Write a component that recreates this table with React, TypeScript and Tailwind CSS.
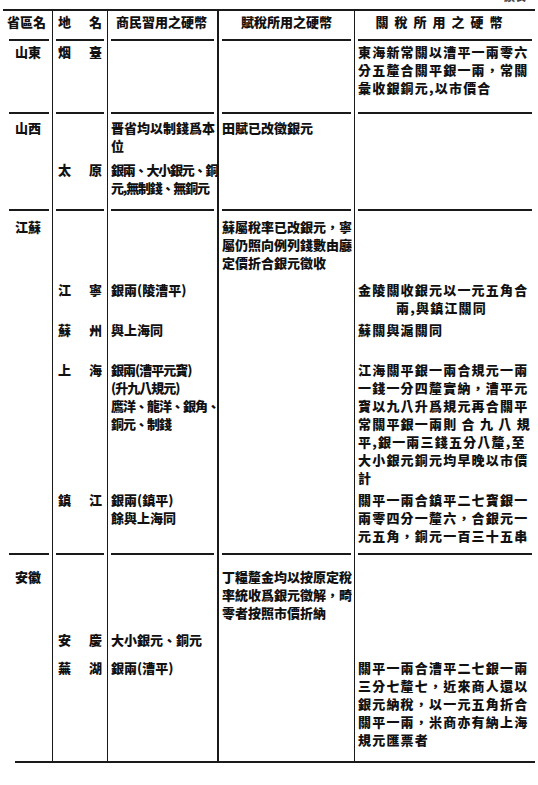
import React from "react";

const font = "font-['Noto_Sans_CJK_TC','Noto_Sans_CJK_SC',sans-serif] font-black text-[#111]";
const cols = "grid grid-cols-[49px_55px_110px_137px_181px]";

function Lines({ lines, className = "" }: { lines: React.ReactNode[]; className?: string }) {
  return (
    <div className={className}>
      {lines.map((l, i) => (
        <div key={i} className="h-[18px] leading-[18px] whitespace-pre">
          {l}
        </div>
      ))}
    </div>
  );
}

function Pair({ a, b }: { a: string; b: string }) {
  return (
    <div className="flex justify-between px-[5px] h-[18px] leading-[18px]">
      <span>{a}</span>
      <span>{b}</span>
    </div>
  );
}

// separator under a block, broken at the column lines
function Rule() {
  return (
    <div className={`${cols} h-[2px]`}>
      <div className="flex items-center pl-[6px] pr-[3px]">
        <div className="h-[1.5px] w-full bg-[#1a1a1a]" />
      </div>
      <div className="flex items-center px-[3px] border-l-[1.5px] border-[#1a1a1a]">
        <div className="h-[1.5px] w-full bg-[#1a1a1a]" />
      </div>
      <div className="flex items-center px-[3px] border-l-[1.5px] border-[#1a1a1a]">
        <div className="h-[1.5px] w-full bg-[#1a1a1a]" />
      </div>
      <div className="flex items-center px-[3px] border-l-2 border-[#1a1a1a]">
        <div className="h-[1.5px] w-full bg-[#1a1a1a]" />
      </div>
      <div className="flex items-center px-[3px] border-l-[1.5px] border-[#1a1a1a]">
        <div className="h-[1.5px] w-full bg-[#1a1a1a]" />
      </div>
    </div>
  );
}

const c2 = "border-l-[1.5px] border-[#1a1a1a]";
const c3 = "border-l-[1.5px] border-[#1a1a1a] pl-[3px]";
const c4 = "border-l-2 border-[#1a1a1a] pl-[3px]";
const c5 = "border-l-[1.5px] border-[#1a1a1a] pl-[3px] tracking-[1.2px]";

export default function App() {
  return (
    <div className={`w-[538px] h-[785px] bg-white overflow-hidden relative text-[13px] ${font}`}>
      <div className="absolute right-[12px] top-[-12px] text-[11px] text-[#444]">續表</div>

      <div className="ml-[3px] mt-[9px] w-[532px]">
        <div className="h-[2px] bg-[#1a1a1a]" />

        {/* header */}
        <div className={`${cols} h-[28px]`}>
          <div className="pl-[4px] pt-[2px] leading-[18px]">省區名</div>
          <div className={`${c2} pt-[2px]`}>
            <Pair a="地" b="名" />
          </div>
          <div className={`${c2} pt-[2px] pr-[2px] text-center leading-[18px]`}>商民習用之硬幣</div>
          <div className="border-l-2 border-[#1a1a1a] pt-[2px] text-center leading-[18px]">賦稅所用之硬幣</div>
          <div className={`${c2} pt-[2px] text-center leading-[18px] tracking-[6px] pl-[4px] pr-[10px]`}>關稅所用之硬幣</div>
        </div>
        <Rule />

        {/* 山東 */}
        <div className={`${cols} grid-rows-[71px]`}>
          <div className="pl-[12px] pt-[2px]">
            <Lines lines={["山東"]} />
          </div>
          <div className={`${c2} pt-[2px]`}>
            <Pair a="烟" b="臺" />
          </div>
          <div className={c3} />
          <div className={c4} />
          <div className={`${c5} pt-[2px]`}>
            <Lines lines={["東海新常關以漕平一兩零六", "分五釐合關平銀一兩，常關", "彙收銀銅元,以市價合"]} />
          </div>
        </div>
        <Rule />

        {/* 山西 */}
        <div className={`${cols} grid-rows-[41px_54px]`}>
          <div className="row-span-full pl-[12px] pt-[5px]">
            <Lines lines={["山西"]} />
          </div>
          <div className={c2} />
          <div className={`${c3} pt-[5px]`}>
            <Lines lines={["晋省均以制錢爲本", "位"]} />
          </div>
          <div className={`${c4} row-span-full col-start-4 row-start-1 pt-[5px]`}>
            <Lines lines={["田賦已改徵銀元"]} />
          </div>
          <div className={`${c2} row-span-full col-start-5 row-start-1`} />
          <div className={`${c2} col-start-2 row-start-2 pt-[6px]`}>
            <Pair a="太" b="原" />
          </div>
          <div className={`${c3} col-start-3 row-start-2 pt-[6px]`}>
            <Lines className="tracking-[-1.2px]" lines={["銀兩、大小銀元、銅", "元,無制錢、無銅元"]} />
          </div>
        </div>
        <Rule />

        {/* 江蘇 */}
        <div className={`${cols} grid-rows-[64px_40px_40px_130px_68px]`}>
          <div className="row-span-full col-start-1 row-start-1 pl-[12px] pt-[7px]">
            <Lines lines={["江蘇"]} />
          </div>
          <div className={`${c4} row-span-full col-start-4 row-start-1 pt-[7px]`}>
            <Lines lines={["蘇屬稅率已改銀元，寧", "屬仍照向例列錢數由廳", "定價折合銀元徵收"]} />
          </div>

          <div className={`${c2} col-start-2 row-start-1`} />
          <div className={`${c3} col-start-3 row-start-1`} />
          <div className={`${c5} col-start-5 row-start-1`} />

          <div className={`${c2} col-start-2 row-start-2 pt-[6px]`}>
            <Pair a="江" b="寧" />
          </div>
          <div className={`${c3} col-start-3 row-start-2 pt-[6px]`}>
            <Lines lines={["銀兩(陵漕平)"]} />
          </div>
          <div className={`${c5} col-start-5 row-start-2 pt-[6px]`}>
            <Lines
              lines={[
                "金陵關收銀元以一元五角合",
                <span key="x" className="pl-[38px]">
                  兩,與鎮江關同
                </span>,
              ]}
            />
          </div>

          <div className={`${c2} col-start-2 row-start-3 pt-[6px]`}>
            <Pair a="蘇" b="州" />
          </div>
          <div className={`${c3} col-start-3 row-start-3 pt-[6px]`}>
            <Lines lines={["與上海同"]} />
          </div>
          <div className={`${c5} col-start-5 row-start-3 pt-[6px]`}>
            <Lines lines={["蘇關與滬關同"]} />
          </div>

          <div className={`${c2} col-start-2 row-start-4 pt-[6px]`}>
            <Pair a="上" b="海" />
          </div>
          <div className={`${c3} col-start-3 row-start-4 pt-[6px]`}>
            <Lines className="tracking-[-1px]" lines={["銀兩(漕平元寶)", "(升九八規元)", "鷹洋、龍洋、銀角、", "銅元、制錢"]} />
          </div>
          <div className={`${c5} col-start-5 row-start-4 pt-[6px]`}>
            <Lines
              lines={[
                "江海關平銀一兩合規元一兩",
                "一錢一分四釐實納，漕平元",
                "寶以九八升爲規元再合關平",
                "常關平銀一兩則 合 九 八 規",
                "平,銀一兩三錢五分八釐,至",
                "大小銀元銅元均早晚以市價",
                "計",
              ]}
            />
          </div>

          <div className={`${c2} col-start-2 row-start-5 pt-[6px]`}>
            <Pair a="鎮" b="江" />
          </div>
          <div className={`${c3} col-start-3 row-start-5 pt-[6px]`}>
            <Lines lines={["銀兩(鎮平)", "餘與上海同"]} />
          </div>
          <div className={`${c5} col-start-5 row-start-5 pt-[6px]`}>
            <Lines lines={["關平一兩合鎮平二七寶銀一", "兩零四分一釐六，合銀元一", "元五角，銅元一百三十五串"]} />
          </div>
        </div>
        <Rule />

        {/* 安徽 */}
        <div className={`${cols} grid-rows-[70px_28px_108px]`}>
          <div className="row-span-full col-start-1 row-start-1 pl-[12px] pt-[13px]">
            <Lines lines={["安徽"]} />
          </div>
          <div className={`${c4} row-span-full col-start-4 row-start-1 pt-[13px]`}>
            <Lines lines={["丁糧釐金均以按原定稅", "率統收爲銀元徵解，畸", "零者按照市價折納"]} />
          </div>

          <div className={`${c2} col-start-2 row-start-1`} />
          <div className={`${c3} col-start-3 row-start-1`} />
          <div className={`${c5} col-start-5 row-start-1`} />

          <div className={`${c2} col-start-2 row-start-2 pt-[6px]`}>
            <Pair a="安" b="慶" />
          </div>
          <div className={`${c3} col-start-3 row-start-2 pt-[6px]`}>
            <Lines lines={["大小銀元、銅元"]} />
          </div>
          <div className={`${c5} col-start-5 row-start-2`} />

          <div className={`${c2} col-start-2 row-start-3 pt-[6px]`}>
            <Pair a="蕪" b="湖" />
          </div>
          <div className={`${c3} col-start-3 row-start-3 pt-[6px]`}>
            <Lines lines={["銀兩(漕平)"]} />
          </div>
          <div className={`${c5} col-start-5 row-start-3 pt-[6px]`}>
            <Lines
              lines={[
                "關平一兩合漕平二七銀一兩",
                "三分七釐七，近來商人還以",
                "銀元納稅，以一元五角折合",
                "關平一兩，米商亦有納上海",
                "規元匯票者",
              ]}
            />
          </div>
        </div>

        <div className="ml-[12px] h-[2px] bg-[#1a1a1a]" />
      </div>
    </div>
  );
}
